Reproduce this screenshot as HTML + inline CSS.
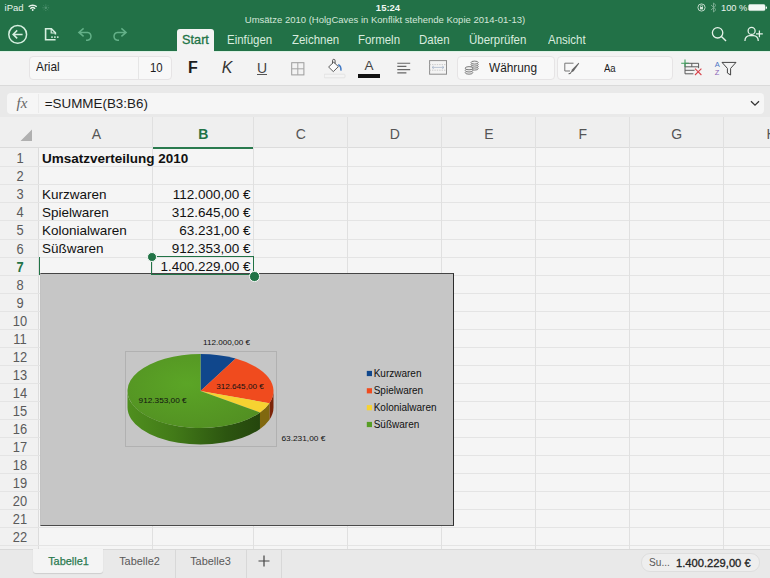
<!DOCTYPE html>
<html lang="de">
<head>
<meta charset="utf-8">
<title>Umsätze 2010</title>
<style>
html,body{margin:0;padding:0;}
body{width:770px;height:578px;overflow:hidden;position:relative;background:#f5f5f5;font-family:"Liberation Sans",sans-serif;color:#1f1f1f;}
.abs{position:absolute;}
#top{left:0;top:0;width:770px;height:51px;background:#227147;z-index:2;}
#top .st{position:absolute;top:2px;font-size:9.5px;color:#e9f3ec;line-height:12px;white-space:nowrap;}
#title{position:absolute;left:0;width:770px;top:14px;text-align:center;font-size:9.5px;line-height:12px;color:#d3e6d9;white-space:nowrap;}
.tab{position:absolute;top:31px;font-size:12.6px;line-height:18px;color:#d9ecdf;white-space:nowrap;transform:scaleX(.91);transform-origin:0 50%;}
#tabStart{position:absolute;left:177px;top:29.3px;width:37.3px;height:23px;background:#f3f3f3;border-radius:3px 3px 0 0;}
#tabStart span{position:absolute;left:0;width:37px;text-align:center;top:2px;font-size:12.7px;transform:scaleX(1);line-height:18px;color:#217346;-webkit-text-stroke:0.3px #217346;}
#ribbon{left:0;top:51px;width:770px;height:34px;background:#f3f3f3;border-top:1.6px solid #ddf2e5;box-sizing:border-box;}
.box{position:absolute;background:#f8f8f8;border:1px solid #e6e4e5;border-radius:4px;box-sizing:border-box;}
.rt{position:absolute;white-space:nowrap;color:#1c1c1c;}
.sx{transform:scaleX(.91);transform-origin:0 50%;}
#fbar{left:0;top:84.5px;width:770px;height:33px;background:#e9e9e9;border-top:1.5px solid #dadada;box-sizing:border-box;}
#fbox{left:6.5px;top:93px;width:757.5px;height:21px;background:#f6f6f6;border-radius:4px;}
#colhdr{left:0;top:117.3px;width:770px;height:31.2px;background:#efefef;border-bottom:1px solid #dcdcdc;box-sizing:border-box;}
.ch{position:absolute;top:126px;margin-left:0.8px;font-size:14px;line-height:16px;color:#555;text-align:center;}
#rowhdr{left:0;top:148px;width:39px;height:401px;background:#f1f1f1;border-right:1px solid #dcdcdc;box-sizing:border-box;}
.rh{position:absolute;left:1.8px;width:36px;margin-top:0.1px;text-align:center;font-size:14px;transform:scaleX(.92);line-height:18px;color:#5a5a5a;}
.hl{position:absolute;left:0;width:770px;height:1px;background:#e4e4e4;}
.vl{position:absolute;top:117px;width:1px;height:432px;background:#e0e0e0;}
.c{position:absolute;margin-top:0.9px;font-size:13.5px;line-height:18px;white-space:nowrap;color:#111;}
.r{text-align:right;width:96px;left:154.5px;}
#chart{left:39.6px;top:273px;width:414.4px;height:252.6px;background:#c6c6c6;border:1px solid #2d2d2d;border-top-color:#444;border-left-color:#c2c2c2;border-bottom:1.7px solid #4a4a4a;box-sizing:border-box;}
#bottom{left:0;top:549px;width:770px;height:29px;background:#e9e9e9;border-top:1.3px solid #d9d9d9;box-sizing:border-box;}
.sh{position:absolute;top:554px;font-size:11.5px;line-height:14px;color:#585858;text-align:center;white-space:nowrap;transform:scaleX(.95);}
</style>
</head>
<body>
<!-- top green bar -->
<div id="top" class="abs">
  <span class="st" style="left:4.6px;">iPad</span>
  <svg class="abs" style="left:27.8px;top:3.5px" width="9.4" height="7.4" viewBox="0 0 12 9"><path d="M0.8 3.4 A7.4 7.4 0 0 1 11.2 3.4" fill="none" stroke="#e9f3ec" stroke-width="1.9"/><path d="M2.9 5.7 A4.4 4.4 0 0 1 9.1 5.7" fill="none" stroke="#e9f3ec" stroke-width="1.8"/><circle cx="6" cy="7.4" r="1.2" fill="#e9f3ec"/></svg>
  <svg class="abs" style="left:42px;top:3.5px" width="7.6" height="7.6" viewBox="0 0 9 9"><circle cx="4.5" cy="4.5" r="1.5" fill="#4f9370"/><path d="M4.5 0.5V2M4.5 7V8.5M0.5 4.5H2M7 4.5H8.5M1.7 1.7L2.7 2.7M6.3 6.3L7.3 7.3M1.7 7.3L2.7 6.3M6.3 2.7L7.3 1.7" stroke="#4f9370" stroke-width="0.9"/></svg>
  <span class="st" style="left:3px;width:770px;text-align:center;font-weight:bold;color:#f1f8f3;">15:24</span>
  <svg class="abs" style="left:697px;top:3px" width="9" height="9" viewBox="0 0 9 9"><circle cx="4.5" cy="4.5" r="3.6" fill="none" stroke="#cfe3d6" stroke-width="0.9"/><rect x="3" y="4" width="3" height="2.4" fill="#cfe3d6"/><path d="M3.5 4V3.2A1 1 0 0 1 5.5 3.2V4" fill="none" stroke="#cfe3d6" stroke-width="0.7"/></svg>
  <svg class="abs" style="left:710px;top:2px" width="7" height="11" viewBox="0 0 7 11"><path d="M1 3L6 7.6L3.5 10V1L6 3.4L1 8" fill="none" stroke="#7fb095" stroke-width="0.9"/></svg>
  <span class="st" style="left:721px;font-size:9.3px;">100 %</span>
  <svg class="abs" style="left:748px;top:3px" width="20" height="9" viewBox="0 0 20 9"><rect x="0.6" y="1.6" width="16.4" height="6" rx="1.3" fill="#f3f8f5" stroke="#f3f8f5" stroke-width="0.5"/><rect x="17.7" y="3.4" width="1.3" height="2.4" rx="0.5" fill="#f3f8f5"/></svg>

  <div id="title">Umsätze 2010 (HolgCaves in Konflikt stehende Kopie 2014-01-13)</div>

  <!-- back -->
  <svg class="abs" style="left:7px;top:24px" width="22" height="22" viewBox="0 0 22 22"><circle cx="10.7" cy="10.4" r="8.9" fill="none" stroke="#d6efe0" stroke-width="1.5"/><path d="M15.6 10.4H6.4M10.2 6.4L6.1 10.4L10.2 14.4" fill="none" stroke="#d6efe0" stroke-width="1.5"/></svg>
  <!-- file -->
  <svg class="abs" style="left:44px;top:27px" width="17" height="15" viewBox="0 0 17 15"><path d="M11.4 7.6V5.8L7.4 1.7H1.6V12.8H11.6" fill="none" stroke="#d6efe0" stroke-width="1.6"/><path d="M7.2 1.7V6H11.4" fill="none" stroke="#d6efe0" stroke-width="1.2"/><rect x="6.2" y="8.6" width="9.6" height="3" rx="1.5" fill="#227147"/><circle cx="8" cy="10.1" r="0.95" fill="#d6efe0"/><circle cx="10.9" cy="10.1" r="0.95" fill="#d6efe0"/><circle cx="13.8" cy="10.1" r="0.95" fill="#d6efe0"/></svg>
  <!-- undo -->
  <svg class="abs" style="left:77px;top:27px" width="17" height="15" viewBox="0 0 17 15"><path d="M6.6 1.4L1.9 5.4L6.6 9.4M2.3 5.4H10.6A4 4 0 0 1 10.6 13.3H9" fill="none" stroke="#63b088" stroke-width="1.5"/></svg>
  <!-- redo -->
  <svg class="abs" style="left:111px;top:27px" width="17" height="15" viewBox="0 0 17 15"><path d="M10.4 1.4L15.1 5.4L10.4 9.4M14.7 5.4H6.4A4 4 0 0 0 6.4 13.3H8" fill="none" stroke="#63b088" stroke-width="1.5"/></svg>

  <div id="tabStart"><span>Start</span></div>
  <span class="tab" style="left:227px;">Einfügen</span>
  <span class="tab" style="left:292px;">Zeichnen</span>
  <span class="tab" style="left:358px;">Formeln</span>
  <span class="tab" style="left:419px;">Daten</span>
  <span class="tab" style="left:469px;">Überprüfen</span>
  <span class="tab" style="left:548px;">Ansicht</span>

  <!-- search -->
  <svg class="abs" style="left:710.2px;top:24.6px" width="18" height="18" viewBox="0 0 18 18"><circle cx="7.6" cy="7.8" r="5.2" fill="none" stroke="#e6f3ea" stroke-width="1.3"/><path d="M11.2 11.2L16 16" stroke="#e6f3ea" stroke-width="1.4"/></svg>
  <!-- share -->
  <svg class="abs" style="left:743px;top:25px" width="22" height="18" viewBox="0 0 22 18"><circle cx="8.6" cy="5.9" r="3.5" fill="none" stroke="#e6f3ea" stroke-width="1.25"/><path d="M2 16V15.2A4.6 4.6 0 0 1 6.6 10.6H10.6A4.6 4.6 0 0 1 15.2 15.2V16" fill="none" stroke="#e6f3ea" stroke-width="1.25"/><path d="M16.4 5.4V12.2M13 8.8H19.8" stroke="#e6f3ea" stroke-width="1.25"/></svg>
</div>

<!-- ribbon -->
<div id="ribbon" class="abs"></div>
<div class="box" style="left:29px;top:55.5px;width:143px;height:24.5px;"></div>
<div class="abs" style="left:138px;top:56px;width:1px;height:23px;background:#e6e6e6;"></div>
<span class="rt sx" style="left:35.5px;top:59px;font-size:13px;line-height:16px;">Arial</span>
<span class="rt sx" style="left:149.5px;top:60px;font-size:12.5px;line-height:16px;">10</span>
<span class="rt" style="left:187px;top:58px;width:12px;text-align:center;font-size:16px;line-height:20px;font-weight:bold;">F</span>
<span class="rt" style="left:221px;top:58px;width:12px;text-align:center;font-size:16px;line-height:20px;font-style:italic;color:#333;">K</span>
<span class="rt" style="left:256px;top:59px;width:12px;text-align:center;font-size:14px;line-height:18px;color:#444;">U</span>
<div class="abs" style="left:257px;top:74px;width:10px;height:1px;background:#555;"></div>
<!-- borders icon -->
<svg class="abs" style="left:291.3px;top:61.6px" width="14" height="14" viewBox="0 0 14 14"><rect x="0.7" y="0.7" width="12.2" height="12.2" fill="none" stroke="#9c9c9c" stroke-width="1"/><path d="M6.8 0.7V12.9M0.7 6.8H12.9" stroke="#a6a6a6" stroke-width="1"/></svg>
<!-- fill bucket -->
<svg class="abs" style="left:324px;top:57.6px" width="22" height="22" viewBox="0 0 22 22"><path d="M9.7 4.2L4.6 9L9.3 13.6L14.4 8.6Z" fill="#fcfcfc" stroke="#4a4a4a" stroke-width="0.9" stroke-linejoin="round"/><path d="M8.5 5.4V2.8Q8.5 1.3 9.8 1.3Q11.1 1.3 11.1 2.8V5.6" fill="none" stroke="#4a4a4a" stroke-width="0.9"/><path d="M14.2 6.6Q17.4 8.2 16.9 12.6" fill="none" stroke="#3f78c4" stroke-width="1.5"/><rect x="0.2" y="16.2" width="20.8" height="3.6" rx="0.8" fill="#f4f4f4" stroke="#dedede" stroke-width="0.8"/></svg>
<!-- font color -->
<span class="rt" style="left:361px;top:57.7px;width:16px;text-align:center;font-size:13.5px;line-height:16px;color:#444;">A</span>
<div class="abs" style="left:358px;top:73.5px;width:22px;height:4px;background:#111;"></div>
<!-- align -->
<svg class="abs" style="left:396.5px;top:62.4px" width="15" height="13" viewBox="0 0 15 13"><path d="M0.3 1.2H13.2M0.3 4.4H9.4M0.3 7.6H13.2M0.3 10.8H9.4" stroke="#666" stroke-width="1.15"/></svg>
<!-- merge -->
<svg class="abs" style="left:429.3px;top:60.3px" width="19" height="16" viewBox="0 0 19 16"><rect x="0.6" y="0.6" width="16.9" height="13.6" fill="#f4f4f4" stroke="#8e8e8e" stroke-width="1"/><path d="M0.6 4.6H17.5M0.6 10.2H17.5" stroke="#c0c0c0" stroke-width="0.8" stroke-dasharray="1.4 1"/><path d="M3 7.4H15M3 7.4L4.8 6.1M3 7.4L4.8 8.7M15 7.4L13.2 6.1M15 7.4L13.2 8.7" stroke="#a9b7cc" stroke-width="0.8" fill="none"/></svg>
<!-- Währung box -->
<div class="box" style="left:456.5px;top:55.5px;width:98.5px;height:24.5px;"></div>
<svg class="abs" style="left:464px;top:60px" width="16" height="16" viewBox="0 0 16 16"><g fill="#f0f0f0" stroke="#6a6a6a" stroke-width="0.85"><ellipse cx="10.6" cy="8.6" rx="3.6" ry="1.5"/><ellipse cx="10.6" cy="6.6" rx="3.6" ry="1.5"/><ellipse cx="10.6" cy="4.6" rx="3.6" ry="1.5"/><ellipse cx="10.6" cy="2.6" rx="3.6" ry="1.5"/><ellipse cx="5" cy="12.6" rx="3.8" ry="1.6"/><ellipse cx="5" cy="10.4" rx="3.8" ry="1.6"/><ellipse cx="5" cy="8.2" rx="3.8" ry="1.6"/></g></svg>
<span class="rt sx" style="left:489.3px;top:60px;font-size:13px;line-height:16px;">Währung</span>
<!-- style box -->
<div class="box" style="left:557px;top:55.5px;width:115.5px;height:24.5px;"></div>
<svg class="abs" style="left:564px;top:62px" width="16" height="13" viewBox="0 0 16 13"><path d="M9.5 1.2H0.8V9H6" fill="none" stroke="#777" stroke-width="1"/><path d="M14.6 0.8L8 7.6L6.6 10.8L9.6 9.2L15.2 1.6Z" fill="#666"/><path d="M4.6 11.6Q6.4 12 7 10.4" stroke="#666" stroke-width="1.2" fill="none"/></svg>
<span class="rt sx" style="left:603.5px;top:60.5px;font-size:10.5px;line-height:14px;">Aa</span>
<!-- insert/delete cells -->
<svg class="abs" style="left:680px;top:58px" width="24" height="20" viewBox="0 0 24 20"><path d="M5 5.3H18.6V10.2M5 5.3V15.8H13.4M5 8.8H18.6M5 12.3H14.6M11.8 5.3V8.8" fill="none" stroke="#5a5a5a" stroke-width="1"/><path d="M5 1.4V9M1.2 5.3H8.8" stroke="#3f9f5d" stroke-width="1.1"/><path d="M15 10.6L21.4 17M21.4 10.6L15 17" stroke="#d8444c" stroke-width="1.1"/></svg>
<!-- sort/filter -->
<span class="rt" style="left:714.8px;top:60.5px;font-size:7.5px;line-height:8px;color:#4b73c4;">A</span>
<span class="rt" style="left:714.8px;top:69.3px;font-size:7.5px;line-height:8px;color:#8a63b8;">Z</span>
<svg class="abs" style="left:721px;top:61px" width="16" height="16" viewBox="0 0 16 16"><path d="M1 1.4H15L9.6 7.4V14L6.4 12V7.4Z" fill="none" stroke="#444" stroke-width="1" stroke-linejoin="round"/></svg>

<!-- formula bar -->
<div id="fbar" class="abs"></div>
<div id="fbox" class="abs"></div>
<span class="rt" style="left:16.5px;top:94px;font-family:'Liberation Serif',serif;font-style:italic;font-size:15px;line-height:18px;color:#666;">fx</span>
<div class="abs" style="left:38px;top:94px;width:1px;height:19px;background:#ebebeb;"></div>
<span class="rt" style="left:44.8px;top:95px;font-size:13.4px;line-height:17px;">=SUMME(B3:B6)</span>
<svg class="abs" style="left:749.8px;top:99.6px" width="10" height="7" viewBox="0 0 10 7"><path d="M1 1.2L5 5.2L9 1.2" fill="none" stroke="#333" stroke-width="1.3"/></svg>

<!-- column headers -->
<div id="colhdr" class="abs"></div>
<svg class="abs" style="left:20px;top:129px" width="13" height="13" viewBox="0 0 13 13"><path d="M12 0.5V12H0.5Z" fill="#b0b0b0"/></svg>
<span class="ch" style="left:39px;width:113px;">A</span>
<span class="ch" style="left:152px;width:101px;color:#217346;font-weight:bold;">B</span>
<span class="ch" style="left:253px;width:94px;">C</span>
<span class="ch" style="left:347px;width:94px;">D</span>
<span class="ch" style="left:441px;width:94px;">E</span>
<span class="ch" style="left:535px;width:94px;">F</span>
<span class="ch" style="left:629px;width:94px;">G</span>
<span class="ch" style="left:760.7px;width:20px;">H</span>
<div class="abs" style="left:152.5px;top:147.2px;width:101px;height:1.7px;background:#2a7a4e;"></div>

<div id="grid">
<div id="rowhdr" class="abs"></div>
<div class="hl" style="top:166.3px"></div>
<div class="hl" style="top:184.3px"></div>
<div class="hl" style="top:202.4px"></div>
<div class="hl" style="top:220.4px"></div>
<div class="hl" style="top:238.5px"></div>
<div class="hl" style="top:256.6px"></div>
<div class="hl" style="top:274.6px"></div>
<div class="hl" style="top:292.6px"></div>
<div class="hl" style="top:310.7px"></div>
<div class="hl" style="top:328.8px"></div>
<div class="hl" style="top:346.8px"></div>
<div class="hl" style="top:364.9px"></div>
<div class="hl" style="top:382.9px"></div>
<div class="hl" style="top:401.0px"></div>
<div class="hl" style="top:419.0px"></div>
<div class="hl" style="top:437.1px"></div>
<div class="hl" style="top:455.1px"></div>
<div class="hl" style="top:473.2px"></div>
<div class="hl" style="top:491.2px"></div>
<div class="hl" style="top:509.2px"></div>
<div class="hl" style="top:527.3px"></div>
<div class="hl" style="top:545.4px"></div>
<div class="vl" style="left:152px"></div>
<div class="vl" style="left:253px"></div>
<div class="vl" style="left:347px"></div>
<div class="vl" style="left:441px"></div>
<div class="vl" style="left:535px"></div>
<div class="vl" style="left:629px"></div>
<div class="vl" style="left:723px"></div>
<span class="rh" style="top:149.2px;">1</span>
<span class="rh" style="top:167.3px;">2</span>
<span class="rh" style="top:185.3px;">3</span>
<span class="rh" style="top:203.4px;">4</span>
<span class="rh" style="top:221.4px;">5</span>
<span class="rh" style="top:239.5px;">6</span>
<span class="rh" style="top:257.6px;color:#217346;font-weight:bold;">7</span>
<span class="rh" style="top:275.6px;">8</span>
<span class="rh" style="top:293.6px;">9</span>
<span class="rh" style="top:311.7px;">10</span>
<span class="rh" style="top:329.8px;">11</span>
<span class="rh" style="top:347.8px;">12</span>
<span class="rh" style="top:365.9px;">13</span>
<span class="rh" style="top:383.9px;">14</span>
<span class="rh" style="top:402.0px;">15</span>
<span class="rh" style="top:420.0px;">16</span>
<span class="rh" style="top:438.1px;">17</span>
<span class="rh" style="top:456.1px;">18</span>
<span class="rh" style="top:474.2px;">19</span>
<span class="rh" style="top:492.2px;">20</span>
<span class="rh" style="top:510.2px;">21</span>
<span class="rh" style="top:528.3px;">22</span>
<span class="c" style="left:42px;top:149.2px;font-weight:bold;">Umsatzverteilung 2010</span>
<span class="c" style="left:42px;top:185.3px;">Kurzwaren</span>
<span class="c r" style="top:185.3px;">112.000,00 €</span>
<span class="c" style="left:42px;top:203.4px;">Spielwaren</span>
<span class="c r" style="top:203.4px;">312.645,00 €</span>
<span class="c" style="left:42px;top:221.4px;">Kolonialwaren</span>
<span class="c r" style="top:221.4px;">63.231,00 €</span>
<span class="c" style="left:42px;top:239.5px;">Süßwaren</span>
<span class="c r" style="top:239.5px;">912.353,00 €</span>
<span class="c r" style="top:257.6px;">1.400.229,00 €</span>
</div>

<!-- chart -->
<div id="chart" class="abs">
<svg class="abs" style="left:-1.6px;top:-1px" width="413" height="250" viewBox="0 0 413 250">
<defs><linearGradient id="gs" x1="0" y1="0" x2="1" y2="0"><stop offset="0" stop-color="#4f8f1e"/><stop offset="0.35" stop-color="#427a18"/><stop offset="0.75" stop-color="#2c5510"/><stop offset="1" stop-color="#25460d"/></linearGradient><radialGradient id="gt" cx="0.45" cy="0.4" r="0.7"><stop offset="0" stop-color="#5ba526"/><stop offset="1" stop-color="#528f22"/></radialGradient></defs>
<rect x="86.5" y="78.5" width="151" height="95" fill="none" stroke="#b1b1b1" stroke-width="1"/>
<path d="M234.50 118.00A73.0 37.0 0 0 1 230.45 130.15L230.45 146.65A73.0 37.0 0 0 0 234.50 134.50Z" fill="#7c2408"/>
<path d="M230.45 130.15A73.0 37.0 0 0 1 220.98 139.45L220.98 155.95A73.0 37.0 0 0 0 230.45 146.65Z" fill="#80680f"/>
<path d="M220.98 139.45A73.0 37.0 0 0 1 88.50 118.00L88.50 134.50A73.0 37.0 0 0 0 220.98 155.95Z" fill="url(#gs)"/>
<path d="M161.5 118.0L161.50 81.00A73.0 37.0 0 0 1 196.66 85.58Z" fill="#10478c"/>
<path d="M161.5 118.0L196.66 85.58A73.0 37.0 0 0 1 230.45 130.15Z" fill="#f04b1e"/>
<path d="M161.5 118.0L230.45 130.15A73.0 37.0 0 0 1 220.98 139.45Z" fill="#f6d231"/>
<path d="M161.5 118.0L220.98 139.45A73.0 37.0 0 1 1 161.50 81.00Z" fill="url(#gt)"/>
<g font-family="Liberation Sans, sans-serif" fill="#111">
<text x="187.5" y="71.9" font-size="8" text-anchor="middle" textLength="47.0" lengthAdjust="spacingAndGlyphs">112.000,00 €</text>
<text x="201.0" y="115.9" font-size="8" text-anchor="middle" textLength="47.4" lengthAdjust="spacingAndGlyphs">312.645,00 €</text>
<text x="123.6" y="129.5" font-size="8" text-anchor="middle" textLength="48.1" lengthAdjust="spacingAndGlyphs">912.353,00 €</text>
<text x="264.4" y="167.7" font-size="8" text-anchor="middle" textLength="43.9" lengthAdjust="spacingAndGlyphs">63.231,00 €</text>
<rect x="327.8" y="97.9" width="5.2" height="5.2" fill="#10478c"/>
<text x="334.7" y="103.9" font-size="10">Kurzwaren</text>
<rect x="327.8" y="115.2" width="5.2" height="5.2" fill="#f04b1e"/>
<text x="334.7" y="121.2" font-size="10">Spielwaren</text>
<rect x="327.8" y="132.1" width="5.2" height="5.2" fill="#f6d231"/>
<text x="334.7" y="138.1" font-size="10">Kolonialwaren</text>
<rect x="327.8" y="148.9" width="5.2" height="5.2" fill="#579d24"/>
<text x="334.7" y="154.9" font-size="10">Süßwaren</text>
</g></svg>
</div>

<!-- selection -->
<div class="abs" style="left:38.5px;top:257px;width:1.6px;height:17.5px;background:#217346;"></div>
<div class="abs" style="left:151px;top:256px;width:103px;height:19px;border:1.5px solid #217346;box-sizing:border-box;"></div>
<div class="abs" style="left:146.9px;top:251.6px;width:10.4px;height:10.4px;border-radius:50%;background:#217346;border:1.2px solid #f4f8f5;box-sizing:border-box;"></div>
<div class="abs" style="left:249.2px;top:271.3px;width:10.4px;height:10.4px;border-radius:50%;background:#217346;border:1.2px solid #f4f8f5;box-sizing:border-box;"></div>

<!-- bottom -->
<div id="bottom" class="abs"></div>
<div class="abs" style="left:33.4px;top:549px;width:69.8px;height:24px;background:#f4f4f4;border-radius:0 0 3px 3px;box-shadow:0 0.5px 1px rgba(0,0,0,0.12);"></div>
<span class="sh" style="left:33px;width:71px;color:#2a7a4f;-webkit-text-stroke:0.25px #2a7a4f;">Tabelle1</span>
<span class="sh" style="left:104px;width:71px;">Tabelle2</span>
<span class="sh" style="left:175px;width:71px;">Tabelle3</span>
<div class="abs" style="left:175px;top:549px;width:1px;height:29px;background:#d8d8d8;"></div>
<div class="abs" style="left:246px;top:549px;width:1px;height:29px;background:#d8d8d8;"></div>
<div class="abs" style="left:281px;top:549px;width:1px;height:29px;background:#d8d8d8;"></div>
<svg class="abs" style="left:258px;top:555px" width="12" height="12" viewBox="0 0 12 12"><path d="M6 0.5V11.5M0.5 6H11.5" stroke="#444" stroke-width="1.2"/></svg>
<div class="abs" style="left:641px;top:553px;width:118.6px;height:18.6px;border-radius:9px;background:#eeeeee;border:1px solid #dedede;box-sizing:border-box;"></div>
<span class="sh" style="left:649px;top:555.3px;text-align:left;transform-origin:0 50%;transform:scaleX(.88);">Su...</span>
<span class="sh" style="left:676px;top:555.5px;text-align:left;color:#222;-webkit-text-stroke:0.3px #222;font-size:11.2px;transform:none;">1.400.229,00 €</span>
</body>
</html>
